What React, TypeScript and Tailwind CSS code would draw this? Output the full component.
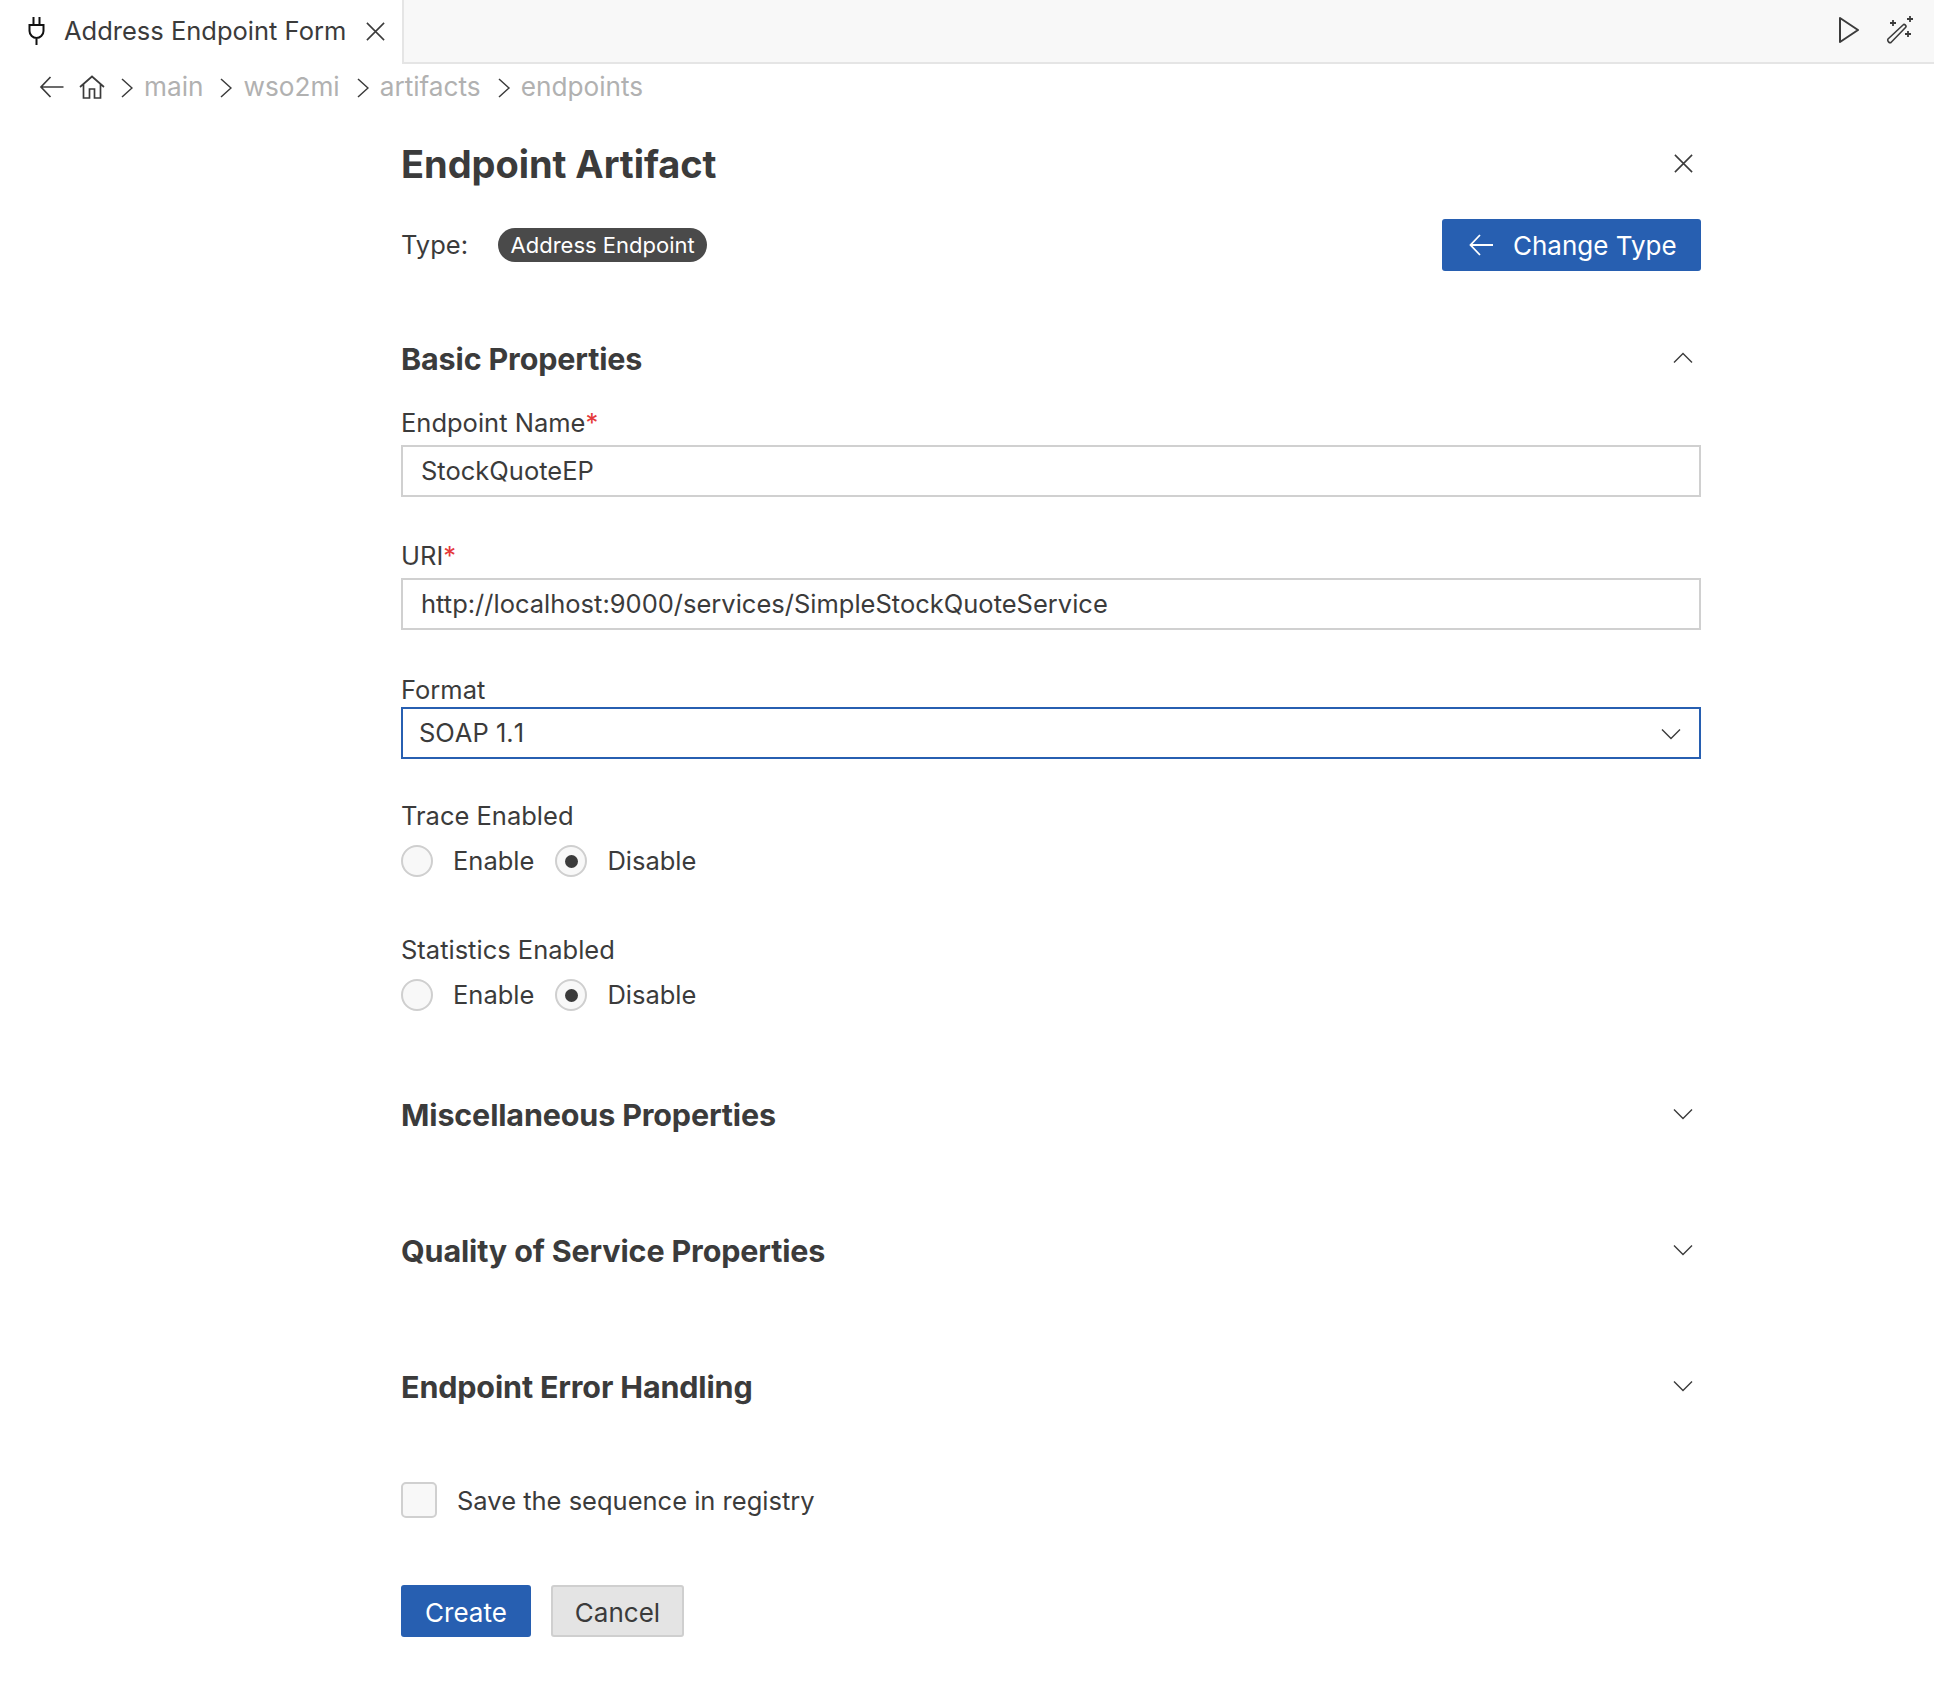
import type { ReactNode } from "react";

const BLUE = "bg-[#275fb1]";

function Close({ className }: { className: string }) {
  return (
    <svg viewBox="0 0 16 16" fill="none" stroke="#3b3b3b" strokeWidth="1" className={className}>
      <path d="M2.5 2.5 13.5 13.5M13.5 2.5 2.5 13.5" />
    </svg>
  );
}

function Chevron({ up, className }: { up?: boolean; className: string }) {
  return (
    <svg viewBox="0 0 20 12" fill="none" stroke="#3b3b3b" strokeWidth="1.4" className={className}>
      <path d={up ? "M1 10.5 10 1.5 19 10.5" : "M1 1.5 10 10.5 19 1.5"} />
    </svg>
  );
}

function Crumb({ label }: { label: string }) {
  return (
    <div className="flex items-center">
      <svg viewBox="0 0 12 20" fill="none" stroke="#3b3b3b" strokeWidth="1.5" className="h-[20px] w-[12px] translate-y-[2px]">
        <path d="M1 1 11 10 1 19" />
      </svg>
      <span className="ml-[11px] text-[#b1b1b1]">{label}</span>
    </div>
  );
}

function SectionHeader({ title, up, className }: { title: string; up?: boolean; className: string }) {
  return (
    <div className={`flex h-[40px] items-center justify-between pr-[8px] ${className}`}>
      <h2 className="text-[30.5px] font-bold tracking-[-0.15px] text-[#3b3b3b]">{title}</h2>
      <Chevron up={up} className="h-[12px] w-[20px] -translate-y-[1px]" />
    </div>
  );
}

function Label({ children, className }: { children: ReactNode; className: string }) {
  return <div className={`h-[30px] text-[25.5px] leading-[30px] text-[#3b3b3b] ${className}`}>{children}</div>;
}

function Field({ label, value, required, className }: { label: string; value: string; required?: boolean; className: string }) {
  return (
    <div className={className}>
      <Label className="">
        {label}
        {required && <span className="text-[#e5393b]">*</span>}
      </Label>
      <div className="mt-[7px] flex h-[52px] items-center border-2 border-[#d0d0d0] pt-[1px] pl-[18px] text-[25.5px] text-[#3b3b3b]">
        {value}
      </div>
    </div>
  );
}

function Radio({ label, checked }: { label: string; checked?: boolean }) {
  return (
    <div className="flex items-center">
      <div className="flex size-[32px] items-center justify-center rounded-full border-2 border-[#cfcfcf] bg-[#f8f8f8]">
        {checked && <div className="size-[13px] rounded-full bg-[#3b3b3b]" />}
      </div>
      <span className="ml-[20px] text-[25.5px] text-[#3b3b3b]">{label}</span>
    </div>
  );
}

function RadioGroup({ label, className }: { label: string; className: string }) {
  return (
    <div className={className}>
      <Label className="">{label}</Label>
      <div className="mt-[14px] flex h-[32px] items-center gap-[21px]">
        <Radio label="Enable" />
        <Radio label="Disable" checked />
      </div>
    </div>
  );
}

export default function App() {
  return (
    <div className="h-[1692px] w-[1934px] overflow-hidden bg-white [font-family:Inter,sans-serif] text-[#3b3b3b]">
      <div className="flex h-[64px] border-b-2 border-[#e5e5e5] bg-[#f8f8f8]">
        <div className="-mb-[2px] flex h-[64px] w-[404px] shrink-0 items-center border-r-2 border-[#e5e5e5] bg-white pb-[2px] pl-[28px]">
          <svg viewBox="0 0 17 28" fill="none" stroke="#111111" strokeWidth="2" className="h-[28px] w-[17px] shrink-0">
            <path d="M5.5 0V8M11.5 0V8M1.5 8H15.5V14C15.5 18 12 21 8.5 21C5 21 1.5 18 1.5 14V8ZM8.5 21V28" />
          </svg>
          <span className="ml-[19px] text-[25.5px] whitespace-nowrap">Address Endpoint Form</span>
          <Close className="ml-[17px] size-[25px] shrink-0" />
        </div>
        <div className="flex flex-1 items-center justify-end pr-[20px] pb-[2px]">
          <svg viewBox="0 0 20 26" fill="none" stroke="#3b3b3b" strokeWidth="2" className="h-[26px] w-[20px]">
            <path d="M1 1 19 13 1 25Z" strokeLinejoin="round" />
          </svg>
          <svg viewBox="0 0 28 28" fill="none" stroke="#3b3b3b" strokeWidth="1.6" className="ml-[27px] size-[28px]">
            <path d="M2 23 17 9C18.5 7.5 21 10 19.5 11.5L5 26.5C3.5 27.5 1 25 2 23Z" />
            <path d="M7 4V10M4 7H10M24 0V6M21 3H27M22 15V21M19 18H25" strokeWidth="1.8" />
          </svg>
        </div>
      </div>

      <div className="flex h-[45px] items-center pl-[39px] text-[26.2px]">
        <svg viewBox="0 0 24 22" fill="none" stroke="#3b3b3b" strokeWidth="1.7" className="h-[22px] w-[25px]">
          <path d="M24 11H2M11 1 1.5 11 11 21" />
        </svg>
        <svg viewBox="0 0 26 24" fill="none" stroke="#3b3b3b" strokeWidth="1.7" className="ml-[15px] h-[24px] w-[26px]">
          <path d="M1 12 13 1.5 25 12M4.5 9V23H10.5V14H15.5V23H21.5V9" />
        </svg>
        <div className="ml-[16px] flex items-center gap-[17px]">
          <Crumb label="main" />
          <Crumb label="wso2mi" />
          <Crumb label="artifacts" />
          <Crumb label="endpoints" />
        </div>
      </div>

      <main className="ml-[401px] w-[1300px]">
        <div className="mt-[33px] flex h-[44px] items-center justify-between pr-[5px]">
          <h1 className="text-[38px] font-bold tracking-[-0.05px] text-[#3b3b3b]">Endpoint Artifact</h1>
          <Close className="size-[25px] -translate-y-[1px]" />
        </div>

        <div className="mt-[33px] flex h-[52px] items-center">
          <span className="text-[25.5px]">Type:</span>
          <span className="ml-[30px] flex h-[34px] items-center rounded-full bg-[#4a4a4a] px-[12.5px] text-[22px] text-white">
            Address Endpoint
          </span>
          <button type="button" className={`ml-auto flex h-[52px] w-[259px] items-center rounded-[3px] ${BLUE} pl-[27px] text-[26px] text-white`}>
            <svg viewBox="0 0 24 22" fill="none" stroke="#ffffff" strokeWidth="1.8" className="h-[22px] w-[24px]">
              <path d="M24 11H2M11 1 1.5 11 11 21" />
            </svg>
            <span className="mt-[1px] ml-[20px]">Change Type</span>
          </button>
        </div>

        <SectionHeader title="Basic Properties" up className="mt-[68px]" />

        <Field label="Endpoint Name" value="StockQuoteEP" required className="mt-[29px]" />
        <Field label="URI" value="http://localhost:9000/services/SimpleStockQuoteService" required className="mt-[44px]" />

        <div className="mt-[45px]">
          <Label className="">Format</Label>
          <div className="mt-[2px] flex h-[52px] items-center justify-between border-2 border-[#275fb1] pt-[1px] pr-[18px] pl-[16px] text-[25.5px] text-[#3b3b3b]">
            <span className="[font-kerning:none]">SOAP 1.1</span>
            <Chevron className="h-[12px] w-[20px]" />
          </div>
        </div>

        <RadioGroup label="Trace Enabled" className="mt-[42px]" />
        <RadioGroup label="Statistics Enabled" className="mt-[58px]" />

        <SectionHeader title="Miscellaneous Properties" className="mt-[84px]" />
        <SectionHeader title="Quality of Service Properties" className="mt-[96px]" />
        <SectionHeader title="Endpoint Error Handling" className="mt-[96px]" />

        <div className="mt-[74px] flex items-center">
          <div className="size-[36px] rounded-[5px] border-2 border-[#d0d0d0] bg-[#f8f8f8]" />
          <span className="ml-[20px] translate-y-[1px] text-[25.5px] text-[#3b3b3b]">Save the sequence in registry</span>
        </div>

        <div className="mt-[66px] flex gap-[20px]">
          <button type="button" className={`h-[52px] w-[130px] rounded-[3px] ${BLUE} pt-[2px] text-[26px] text-white`}>Create</button>
          <button type="button" className="h-[52px] w-[133px] rounded-[3px] border-2 border-[#cfcfcf] bg-[#e4e4e4] pt-[2px] text-[26px] text-[#3b3b3b]">Cancel</button>
        </div>
      </main>
    </div>
  );
}
